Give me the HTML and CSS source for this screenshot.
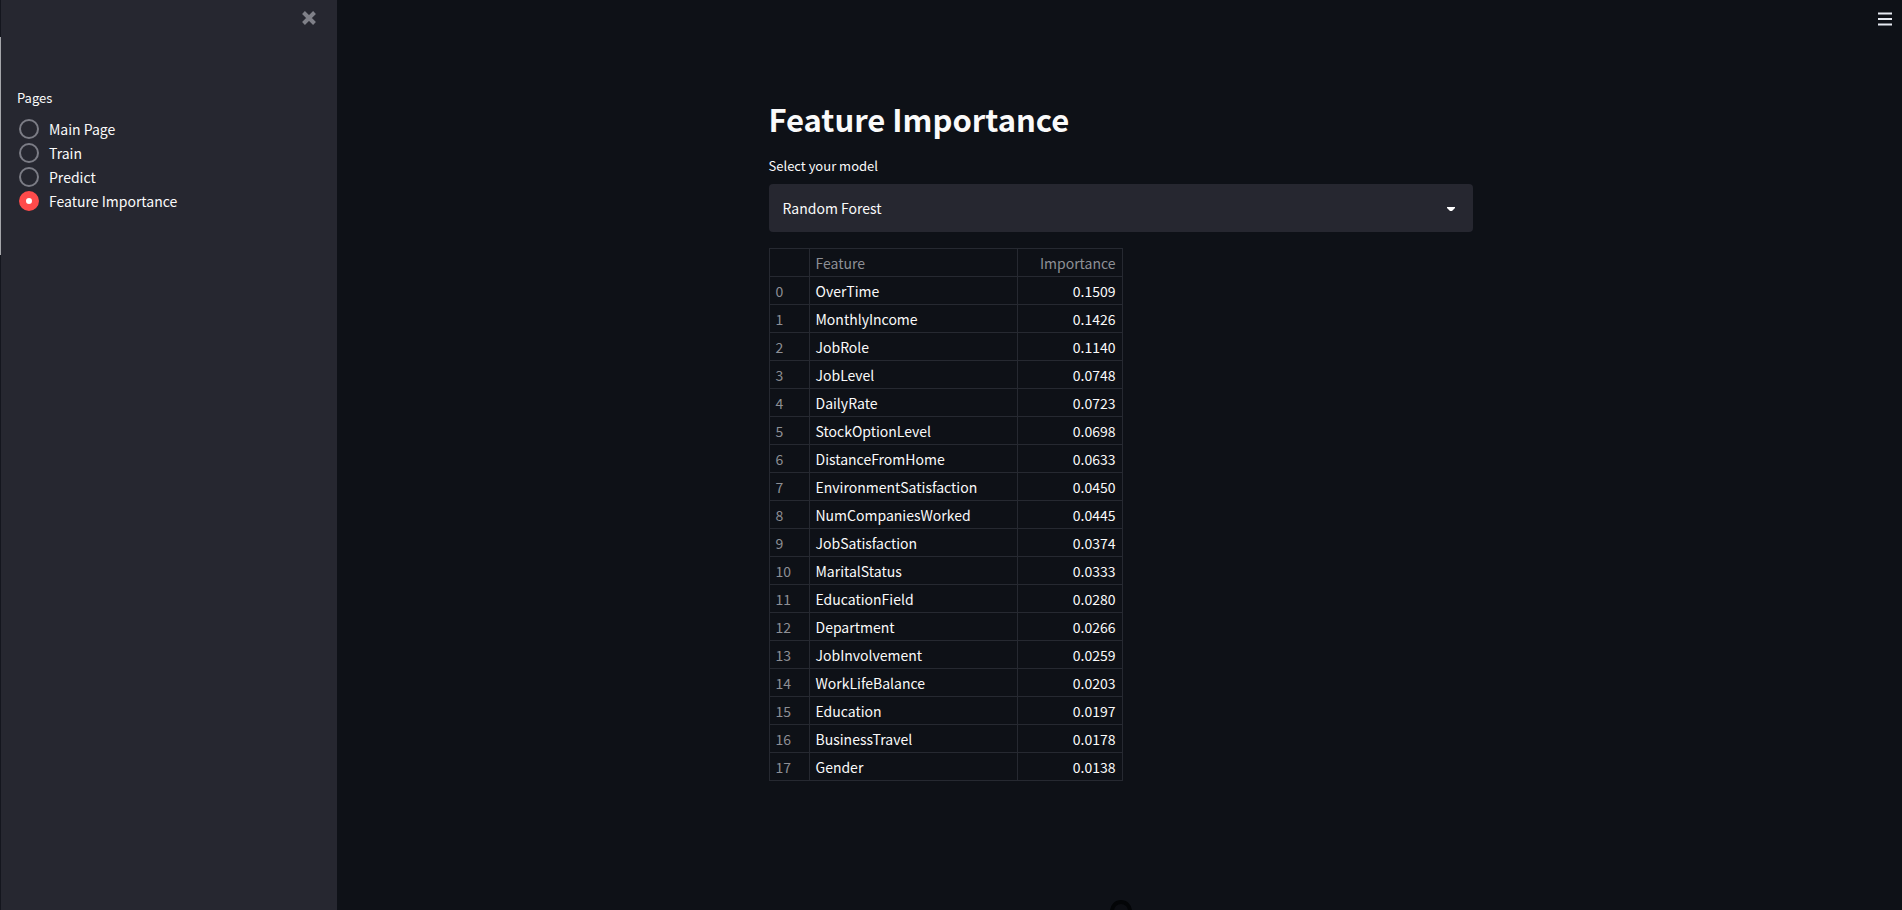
FILE: index.html
```html
<!DOCTYPE html>
<html lang="en">
<head>
<meta charset="utf-8">
<title>Feature Importance</title>
<link rel="stylesheet" href="styles.css">
</head>
<body>
<div class="app">
  <div class="edge"><div class="edge-thumb"></div></div>
  <aside class="sidebar">
    <div class="sidebar-top">
      <button class="icon-button" type="button" aria-label="Close sidebar">
        <svg width="16" height="16" viewBox="0 0 16 16"><path d="M2.500 2.500l11 11M13.500 2.500l-11 11" stroke="#7f8088" stroke-width="4" fill="none"/></svg>
      </button>
    </div>
    <fieldset class="pages">
      <legend class="label">Pages</legend>
      <label class="option"><input class="radio" type="radio" name="page">Main Page</label>
      <label class="option"><input class="radio" type="radio" name="page">Train</label>
      <label class="option"><input class="radio" type="radio" name="page">Predict</label>
      <label class="option"><input class="radio" type="radio" name="page" checked>Feature Importance</label>
    </fieldset>
  </aside>
  <main class="main">
    <button class="icon-button menu" type="button" aria-label="Menu">
      <svg width="14" height="14" viewBox="0 0 14 14"><path d="M0 1.500h14M0 7h14M0 12.500h14" stroke="#e6eaf1" stroke-width="2" fill="none"/></svg>
    </button>
    <div class="content">
      <h1 class="title">Feature Importance</h1>
      <label class="label" for="model">Select your model</label>
      <div class="select-wrap">
        <select class="select" id="model"><option>Random Forest</option></select>
        <svg class="caret" width="8" height="4" viewBox="0 0 8 4"><path d="M0 0h8v1L5 4H3L0 1z" fill="#fff"/></svg>
      </div>
      <table class="table">
        <thead><tr><th class="index"></th><th class="feature">Feature</th><th class="value">Importance</th></tr></thead>
        <tbody>
          <tr><th>0</th><td>OverTime</td><td>0.1509</td></tr>
          <tr><th>1</th><td>MonthlyIncome</td><td>0.1426</td></tr>
          <tr><th>2</th><td>JobRole</td><td>0.1140</td></tr>
          <tr><th>3</th><td>JobLevel</td><td>0.0748</td></tr>
          <tr><th>4</th><td>DailyRate</td><td>0.0723</td></tr>
          <tr><th>5</th><td>StockOptionLevel</td><td>0.0698</td></tr>
          <tr><th>6</th><td>DistanceFromHome</td><td>0.0633</td></tr>
          <tr><th>7</th><td>EnvironmentSatisfaction</td><td>0.0450</td></tr>
          <tr><th>8</th><td>NumCompaniesWorked</td><td>0.0445</td></tr>
          <tr><th>9</th><td>JobSatisfaction</td><td>0.0374</td></tr>
          <tr><th>10</th><td>MaritalStatus</td><td>0.0333</td></tr>
          <tr><th>11</th><td>EducationField</td><td>0.0280</td></tr>
          <tr><th>12</th><td>Department</td><td>0.0266</td></tr>
          <tr><th>13</th><td>JobInvolvement</td><td>0.0259</td></tr>
          <tr><th>14</th><td>WorkLifeBalance</td><td>0.0203</td></tr>
          <tr><th>15</th><td>Education</td><td>0.0197</td></tr>
          <tr><th>16</th><td>BusinessTravel</td><td>0.0178</td></tr>
          <tr><th>17</th><td>Gender</td><td>0.0138</td></tr>
        </tbody>
      </table>
    </div>
    <div class="knob"></div>
  </main>
</div>
</body>
</html>
```
FILE: styles.css
```css
* { box-sizing: border-box; }

body {
  margin: 0;
  background: #0e1117;
  color: #fafafa;
  font: 14px/24px "Noto Sans CJK SC", "Noto Sans", sans-serif;
}

.app { display: flex; min-height: 100vh; }

.edge { width: 1px; padding-top: 37px; background: #14161e; }
.edge-thumb { height: 218px; background: #a5a6aa; }

.sidebar { width: 336px; flex: none; background: #262730; }
.sidebar-top { display: flex; justify-content: flex-end; padding: 10px 20px; }

.icon-button { display: flex; padding: 0; border: 0; background: none; cursor: pointer; }

.label { display: block; padding: 0; font-size: 13px; line-height: 20px; }

.pages { margin: 0; padding: 52px 16px; border: 0; }
.pages .label { float: left; width: 100%; margin-bottom: 9px; }
.option { display: flex; align-items: center; gap: 10px; clear: both; height: 24px; padding-left: 2px; }

.radio {
  appearance: none;
  width: 20px;
  height: 20px;
  margin: 0;
  border: 2px solid #7b7c85;
  border-radius: 50%;
}
.radio:checked { border: 7px solid #ff4b4b; background: #fff; }

.main { position: relative; flex: 1; overflow: hidden; padding-left: 2px; }
.menu { position: absolute; top: 12px; right: 10px; }

.content { max-width: 736px; margin: 0 auto; padding: 95px 16px; }
.title { margin: 0 0 13px; font-size: 31px; line-height: 48px; font-weight: 700; }

.select-wrap { position: relative; margin: 8px 0 16px; }
.select {
  appearance: none;
  display: block;
  width: 100%;
  height: 48px;
  padding: 0 14px;
  border: 0;
  border-radius: 4px;
  background: #262730;
  color: #fafafa;
  font: inherit;
}
.caret { position: absolute; top: 23px; right: 18px; pointer-events: none; }

.table { border-collapse: collapse; }
.table th, .table td {
  height: 28px;
  padding: 0 6px;
  border: 1px solid #262931;
  text-align: left;
  font-weight: 400;
  line-height: 24px;
}
.table th { color: #8d8f95; }
.table .index { width: 40px; }
.table .feature { width: 208px; }
.table .value { width: 105px; }
.table .value, .table td:last-child { text-align: right; }

.knob {
  position: absolute;
  bottom: -12px;
  left: 50%;
  width: 22px;
  height: 22px;
  margin-left: -10px;
  border: 4px solid #030507;
  border-radius: 50%;
  background: #0b0d12;
}
```
